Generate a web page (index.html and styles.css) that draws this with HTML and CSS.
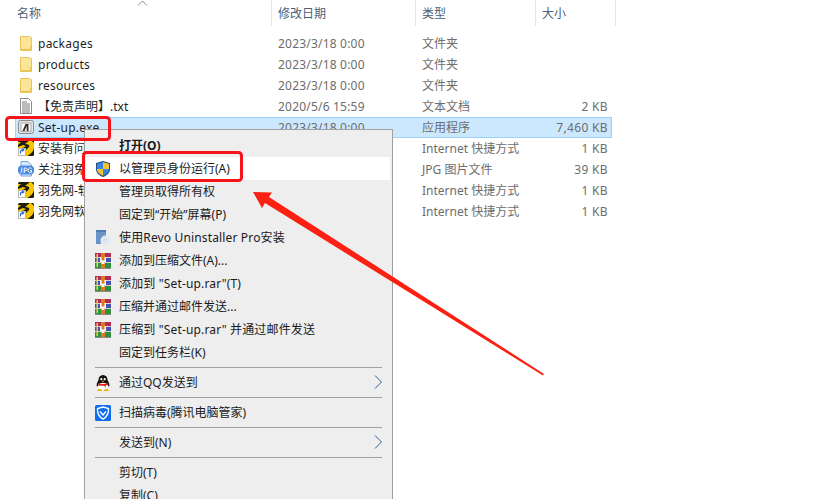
FILE: index.html
```html
<!DOCTYPE html>
<html lang="zh">
<head>
<meta charset="utf-8">
<title>Set-up</title>
<link rel="stylesheet" href="styles.css">
</head>
<body>
<svg class="defs" width="0" height="0" aria-hidden="true">
  <defs>
    <symbol id="i-folder" viewBox="0 0 16 16">
      <path d="M2.500 1.500h9l1 1h1v13h-11z" fill="#fde597" stroke="#e9c458"/>
      <path d="M12.500 11v4.500M3 14.500h9" stroke="#e9c458" fill="none"/>
    </symbol>
    <symbol id="i-txt" viewBox="0 0 16 16">
      <path d="M2.500.5h8l3 3v12h-11z" fill="#fff" stroke="#8a8a8a"/>
      <path d="M4 4h5M4 6h8M4 8h8M4 10h8M4 12h8M4 14h8" stroke="#777"/>
    </symbol>
    <symbol id="i-exe" viewBox="0 0 16 16">
      <rect x=".5" y="1.500" width="15" height="13" rx="2" fill="#e4e4e4" stroke="#8b8b8b"/>
      <rect x="3" y="4" width="10" height="8.500" fill="#fff" stroke="#a8a8a8"/>
      <path d="M4.500 12l3-7h3v7h-1.800v-5l-2.200 5z" fill="#2e2e2e"/>
    </symbol>
    <symbol id="i-link" viewBox="0 0 16 16">
      <rect x="0" y="0" width="16" height="16" rx="1.500" fill="#1d1d10"/>
      <path d="M6 0h6l-5 4c3 0 5 1 4 3L5 13l-1 3h5c4-2 7-5 7-9V3L13 0z" fill="#f7c600"/>
      <path d="M0 2h3L0 5zM5 5l3 1-5 3H0V7z" fill="#f7c600"/>
      <rect x=".5" y="8.500" width="7" height="7" fill="#fff" stroke="#b9b9b9"/>
      <path d="M2.500 13.500v-2c0-1 .7-1.500 1.500-1.500h1M4 8.800l1.700 1.200L4 11.300" fill="none" stroke="#2b63c4" stroke-width="1.200"/>
    </symbol>
    <symbol id="i-jpg" viewBox="0 0 16 16">
      <path d="M3 .500h7l3.500 3.500v11h-10.500z" fill="#dbe8fa" stroke="#7ba6e0"/>
      <rect x="0" y="4.500" width="16" height="9" rx="4" fill="#4a8ae0"/>
      <path d="M3.700 6.500v4c0 .9-.8 1.200-1.600.9M6.200 12v-5h1.500a1.300 1.300 0 010 2.800h-1.500M13.500 7.500c-1.300-1.200-3.300-.5-3.300 1.800s2 3 3.300 2v-1.800h-1.400" fill="none" stroke="#fff"/>
    </symbol>
    <symbol id="i-shield" viewBox="0 0 16 16">
      <path d="M8 0l7 2v6c0 4-3 6.500-7 8-4-1.500-7-4-7-8V2z" fill="#26508c"/>
      <path d="M8 1.200V8H2V2.800z" fill="#3f86d8"/>
      <path d="M8 1.200L14 2.800V8H8z" fill="#f4c430"/>
      <path d="M8 8h6c0 3.200-2.500 5.200-6 6.700z" fill="#3f86d8"/>
      <path d="M8 8H2c0 3.200 2.500 5.200 6 6.700z" fill="#f4c430"/>
    </symbol>
    <symbol id="i-revo" viewBox="0 0 16 16">
      <path d="M1 0h10v10H6v4H1z" fill="#6a94c8"/>
      <path d="M1 0h10v2H1z" fill="#4f7bb3"/>
      <circle cx="10.500" cy="10.500" r="5" fill="#e3e9f2"/>
      <circle cx="10.500" cy="10.500" r="1.300" fill="#fff" stroke="#a9bcd4" stroke-width=".6"/>
    </symbol>
    <symbol id="i-rar" viewBox="0 0 16 16">
      <rect x="0" y="0" width="16" height="5" fill="#b02a5a"/>
      <rect x="0" y="5" width="16" height="5" fill="#4350b4"/>
      <rect x="0" y="10" width="16" height="5" fill="#2f8f40"/>
      <path d="M0 4.500h16M0 9.500h16" stroke="#d9d2b8"/>
      <rect x="0" y="15" width="16" height="1" fill="#8a8a8a"/>
      <rect x="1.500" y="1" width="1.500" height="13" fill="#f0d040"/>
      <rect x="6" y="0" width="4" height="15" fill="#e07a20"/>
      <path d="M5 4v5h6V4H9.500v3.500h-3V4z" fill="#fff"/>
      <rect x="6.500" y="9" width="3" height="2" fill="#fff"/>
    </symbol>
    <symbol id="i-qq" viewBox="0 0 16 16">
      <ellipse cx="8" cy="9.500" rx="5" ry="5.500" fill="#fff"/>
      <path d="M8 0c3 0 4.500 2.200 4.500 5 1.500 2.500 2.500 5.500 1.500 6.500-.5 0-1-.7-1.300-1.300C12 7 4 7 3.300 10.200 3 10.800 2.500 11.500 2 11.500 1 10.500 2 7.500 3.500 5 3.500 2.200 5 0 8 0z" fill="#111"/>
      <circle cx="6.300" cy="4.200" r="1.100" fill="#fff"/><circle cx="9.700" cy="4.200" r="1.100" fill="#fff"/>
      <path d="M6.300 5.800h3.400L8 7z" fill="#f0b000"/>
      <path d="M3.500 8c3 1.200 6 1.200 9 0l.3 1.500-2 1v2.200l-1.500-2H3.500z" fill="#e3231a"/>
      <path d="M2.500 15c1-1.200 3.500-1.200 4.500 0v1H2.500zM9 15c1-1.200 3.500-1.200 4.500 0v1H9z" fill="#f0b000"/>
    </symbol>
    <symbol id="i-guard" viewBox="0 0 16 16">
      <rect width="16" height="16" rx="1.500" fill="#0d6cf2"/>
      <path d="M8 2l5.500 1.500c.3 5-1.500 8.500-5.500 10.500C4 12 2.200 8.500 2.500 3.500z" fill="none" stroke="#fff" stroke-width="1.400"/>
      <path d="M5 6.500L8 10l3-3.500" fill="none" stroke="#fff" stroke-width="1.400"/>
    </symbol>
    <symbol id="i-chev" viewBox="0 0 8 14">
      <path d="M1 .500L7.500 7 1 13.500" fill="none" stroke="#2f5f9f" stroke-width="1"/>
    </symbol>
  </defs>
</svg>

<header class="cols">
  <div class="col col-name">名称</div>
  <div class="col col-date">修改日期</div>
  <div class="col col-type">类型</div>
  <div class="col col-size">大小</div>
</header>
<svg class="sort" width="11" height="6" viewBox="0 0 11 6" aria-hidden="true"><path d="M1 5.500L5.500 1 10 5.500" fill="none" stroke="#8a8a8a"/></svg>

<main class="files">
  <div class="row"><svg class="ficon"><use href="#i-folder"/></svg><span class="name">packages</span><span class="date">2023/3/18 0:00</span><span class="type">文件夹</span><span class="size"></span></div>
  <div class="row"><svg class="ficon"><use href="#i-folder"/></svg><span class="name">products</span><span class="date">2023/3/18 0:00</span><span class="type">文件夹</span><span class="size"></span></div>
  <div class="row"><svg class="ficon"><use href="#i-folder"/></svg><span class="name">resources</span><span class="date">2023/3/18 0:00</span><span class="type">文件夹</span><span class="size"></span></div>
  <div class="row"><svg class="ficon"><use href="#i-txt"/></svg><span class="name zh">【免责声明】.txt</span><span class="date">2020/5/6 15:59</span><span class="type">文本文档</span><span class="size">2 KB</span></div>
  <div class="row selected"><svg class="ficon"><use href="#i-exe"/></svg><span class="name">Set-up.exe</span><span class="date">2023/3/18 0:00</span><span class="type">应用程序</span><span class="size">7,460 KB</span></div>
  <div class="row"><svg class="ficon"><use href="#i-link"/></svg><span class="name zh">安装有问</span><span class="date">2023/3/18 0:00</span><span class="type">Internet 快捷方式</span><span class="size">1 KB</span></div>
  <div class="row"><svg class="ficon"><use href="#i-jpg"/></svg><span class="name zh">关注羽免</span><span class="date">2023/3/18 0:00</span><span class="type">JPG 图片文件</span><span class="size">39 KB</span></div>
  <div class="row"><svg class="ficon"><use href="#i-link"/></svg><span class="name zh">羽免网-软</span><span class="date">2023/3/18 0:00</span><span class="type">Internet 快捷方式</span><span class="size">1 KB</span></div>
  <div class="row"><svg class="ficon"><use href="#i-link"/></svg><span class="name zh">羽免网软</span><span class="date">2023/3/18 0:00</span><span class="type">Internet 快捷方式</span><span class="size">1 KB</span></div>
</main>

<nav class="menu">
  <div class="item first"><span class="micon"></span><b class="label">打开(O)</b></div>
  <div class="item hot"><svg class="micon"><use href="#i-shield"/></svg><span class="label">以管理员身份运行(A)</span></div>
  <div class="item"><span class="micon"></span><span class="label">管理员取得所有权</span></div>
  <div class="item"><span class="micon"></span><span class="label">固定到“开始”屏幕(P)</span></div>
  <div class="item"><svg class="micon"><use href="#i-revo"/></svg><span class="label wide">使用Revo Uninstaller Pro安装</span></div>
  <div class="item"><svg class="micon"><use href="#i-rar"/></svg><span class="label">添加到压缩文件(A)...</span></div>
  <div class="item"><svg class="micon"><use href="#i-rar"/></svg><span class="label wide">添加到 "Set-up.rar"(T)</span></div>
  <div class="item"><svg class="micon"><use href="#i-rar"/></svg><span class="label">压缩并通过邮件发送...</span></div>
  <div class="item"><svg class="micon"><use href="#i-rar"/></svg><span class="label wide">压缩到 "Set-up.rar" 并通过邮件发送</span></div>
  <div class="item"><span class="micon"></span><span class="label">固定到任务栏(K)</span></div>
  <div class="sep"></div>
  <div class="item"><svg class="micon"><use href="#i-qq"/></svg><span class="label">通过QQ发送到</span><svg class="chev"><use href="#i-chev"/></svg></div>
  <div class="sep"></div>
  <div class="item"><svg class="micon"><use href="#i-guard"/></svg><span class="label">扫描病毒(腾讯电脑管家)</span></div>
  <div class="sep"></div>
  <div class="item"><span class="micon"></span><span class="label">发送到(N)</span><svg class="chev"><use href="#i-chev"/></svg></div>
  <div class="sep"></div>
  <div class="item"><span class="micon"></span><span class="label">剪切(T)</span></div>
  <div class="item"><span class="micon"></span><span class="label">复制(C)</span></div>
</nav>

<svg class="marks" width="823" height="499" viewBox="0 0 823 499" aria-hidden="true">
  <rect x="6.500" y="117.500" width="103" height="22" rx="3" fill="none" stroke="#f5141a" stroke-width="3"/>
  <rect x="83.500" y="152.500" width="158" height="28" rx="3" fill="none" stroke="#f5141a" stroke-width="3"/>
  <path d="M253 192L272 192.500 269 197 544 374 543 375.500 265 203 262 208z" fill="#fb2011"/>
</svg>
</body>
</html>
```

FILE: styles.css
```css
* { box-sizing: border-box; }
html, body { margin: 0; height: 100%; overflow: hidden; }
body {
  position: relative;
  background: #fff;
  font: 12px/16px "Noto Sans", "Noto Sans CJK SC", sans-serif;
  color: #6d6d6d;
}
.defs { position: absolute; }

.cols {
  display: grid;
  grid-template-columns: 272px 144px 120px 80px;
  height: 26px;
}
.col {
  padding: 6px 0 0 6px;
  border-right: 1px solid #e5e5e5;
  color: #4c607a;
}
.col-name { padding-left: 17px; }
.sort { position: absolute; left: 137px; top: 0; }

.files { padding: 7px 0 0 15px; width: 612px; }
.row {
  display: grid;
  grid-template-columns: 257px 144px 119px 73px;
  align-items: center;
  height: 21px;
  position: relative;
}
.ficon {
  position: absolute;
  left: 3px;
  top: 2px;
  width: 16px;
  height: 16px;
}
.name { padding-left: 23px; color: #1f1f1f; white-space: nowrap; letter-spacing: .25px; }
.name.zh { letter-spacing: 0; }
.date { padding-left: 6px; letter-spacing: .2px; }
.type { padding-left: 6px; white-space: nowrap; }
.size { text-align: right; letter-spacing: .35px; }
.selected {
  background: #cce8ff;
  box-shadow: inset 0 0 0 1px #99d1ff;
}

.menu {
  position: absolute;
  left: 84px;
  top: 129px;
  width: 309px;
  height: 380px;
  padding: 1px 2px 0 1px;
  background: #eee;
  border: 1px solid #a0a0a0;
  color: #000;
}
.item {
  display: flex;
  align-items: center;
  height: 23px;
  position: relative;
}
.item.first { margin-top: 3px; }
.hot { background: #fff; }
.micon { width: 16px; height: 16px; margin-left: 9px; flex: none; }
.label { margin-left: 8px; white-space: nowrap; color: #1a1a1a; }
.wide { letter-spacing: .15px; }
.chev { position: absolute; right: 8px; top: 4px; width: 8px; height: 14px; }
.sep { height: 1px; margin: 3px 0 0 9px; width: 287px; background: #a0a0a0; }
.sep + .item { margin-top: 3px; }

.marks { position: absolute; left: 0; top: 0; pointer-events: none; }
```
